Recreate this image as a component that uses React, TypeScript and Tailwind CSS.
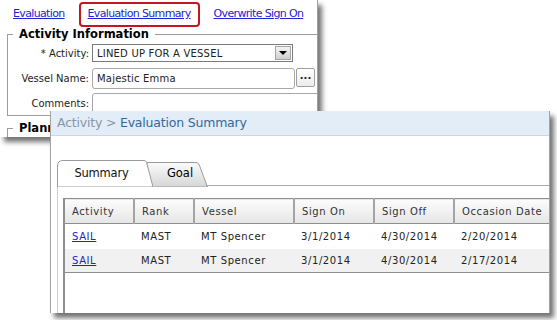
import React from 'react'

const rows = [
  { activity: 'SAIL', rank: 'MAST', vessel: 'MT Spencer', signOn: '3/1/2014', signOff: '4/30/2014', occasion: '2/20/2014' },
  { activity: 'SAIL', rank: 'MAST', vessel: 'MT Spencer', signOn: '3/1/2014', signOff: '4/30/2014', occasion: '2/17/2014' },
]

const columns = ['Activity', 'Rank', 'Vessel', 'Sign On', 'Sign Off', 'Occasion Date']

// Old dialog sitting behind, cut off by the summary window
const EvaluationForm = () => {
  return (
    <div className="absolute left-0 top-0 w-[318px] h-[137px] bg-white overflow-hidden border-r border-[#a0a0a0] shadow-[4px_5px_5px_rgba(0,0,0,0.55)]">
      <div className="flex items-center pt-[2px] pl-[13px] h-[27px] text-[11px] tracking-[-0.65px]">
        <a href="#" className="text-[#1d22d6] underline">Evaluation</a>
        <div className="ml-[14px] h-[25px] px-[7px] flex items-center border-[2.5px] border-[#c3161e] rounded-[4px]">
          <a href="#" className="text-[#1d22d6] underline">Evaluation Summary</a>
        </div>
        <a href="#" className="ml-[14px] text-[#1d22d6] underline">Overwrite Sign On</a>
      </div>

      <fieldset className="ml-[7px] w-[340px] h-[89px] border border-[#9c9c9c]">
        <legend className="ml-[5px] px-[6px] font-bold text-[11.5px] leading-[14px] text-black">Activity Information</legend>
        <div className="grid grid-cols-[81px_1fr] gap-x-[3px] text-[10px] text-[#222] mt-[3px]">
          <div className="h-[18px] flex items-center justify-end">* Activity:</div>
          <div className="w-[201px] h-[18px] flex border border-[#7a7a7a] bg-white">
            <span className="flex-1 flex items-center pl-[4px] tracking-[0.2px]">LINED UP FOR A VESSEL</span>
            <span className="w-[16px] m-[1px] flex items-center justify-center border border-[#a5a5a5] bg-gradient-to-b from-[#f4f4f4] to-[#cfcfcf]">
              <span className="w-0 h-0 border-l-[4px] border-r-[4px] border-t-[4px] border-l-transparent border-r-transparent border-t-black" />
            </span>
          </div>

          <div className="h-[21px] mt-[6px] flex items-center justify-end">Vessel Name:</div>
          <div className="mt-[6px] flex gap-[1px]">
            <div className="w-[203px] h-[21px] flex items-center pl-[4px] border border-[#a8a8a8] rounded-[3px] tracking-[0.2px]">Majestic Emma</div>
            <div className="w-[19px] h-[19px] flex items-center justify-center border border-[#a0a0a0] rounded-[2px] bg-gradient-to-b from-white to-[#ececec] font-bold text-[10px] leading-none pb-[3px]">...</div>
          </div>

          <div className="h-[20px] mt-[4px] flex items-center justify-end">Comments:</div>
          <div className="mt-[4px] w-[240px] h-[30px] border border-[#a8a8a8] rounded-[3px]" />
        </div>
      </fieldset>

      <fieldset className="ml-[7px] mt-[5px] w-[340px] h-[40px] border border-[#9c9c9c]">
        <legend className="ml-[5px] pl-[6px] w-[37px] overflow-hidden whitespace-nowrap font-bold text-[11.5px] leading-[14px] text-black">Planned Voyage</legend>
      </fieldset>
    </div>
  )
}

const Tabs = () => {
  return (
    <div className="flex h-[26px] border-b border-[#a9a9a9] text-[11.5px]">
      <div className="relative z-10 w-[96px] h-[26px] shrink-0">
        <svg className="absolute inset-0" width="96" height="27" viewBox="0 0 96 27">
          <path d="M0.5 27 L0.5 6 Q0.5 0.5 6 0.5 L87 0.5 Q89 0.5 89.6 2.5 L96 27 Z" fill="#ffffff" stroke="#9a9a9a" />
        </svg>
        <span className="relative flex items-center justify-center w-[89px] h-full pt-[2px] text-[#111] tracking-[-0.2px]">Summary</span>
      </div>
      <div className="relative -ml-[6px] mt-[2px] w-[61px] h-[24px] shrink-0">
        <svg className="absolute inset-0" width="61" height="25" viewBox="0 0 61 25">
          <defs>
            <linearGradient id="goalTab" x1="0" y1="0" x2="0" y2="1">
              <stop offset="0" stopColor="#fbfbfb" />
              <stop offset="1" stopColor="#d6d6d6" />
            </linearGradient>
          </defs>
          <path d="M0 25 L0 0.5 L49 0.5 Q51.5 0.5 52.3 3 L60.5 25 Z" fill="url(#goalTab)" stroke="#9a9a9a" />
        </svg>
        <span className="relative flex items-center justify-center w-[60px] h-full pl-[6px] text-black">Goal</span>
      </div>
    </div>
  )
}

const SummaryWindow = () => {
  return (
    <div className="absolute left-[50px] top-[111px] w-[500px] h-[202px] bg-white overflow-hidden border-l border-r border-[#a3a3a3] shadow-[4px_5px_5px_rgba(0,0,0,0.55)] flex flex-col">
      <div className="h-[25px] shrink-0 flex items-center pl-[6px] bg-[#e3edf8] border-b border-[#c9d6e4] text-[12.5px] tracking-[-0.2px]">
        <span className="text-[#8797a8]">Activity &gt;&nbsp;</span>
        <span className="text-[#33689c]">Evaluation Summary</span>
      </div>

      <div className="flex-1 flex flex-col pl-[6px] pt-[24px]">
        <Tabs />
        <div className="flex-1 flex flex-col border-l border-[#cfcfcf] pl-[5px] pt-[12px]">
          <div className="flex-1 border-l-2 border-[#8e8e8e]">
            <table className="table-fixed border-collapse w-[560px] text-[10px] tracking-[0.6px] text-[#222]">
              <colgroup>
                <col className="w-[69px]" />
                <col className="w-[60px]" />
                <col className="w-[100px]" />
                <col className="w-[80px]" />
                <col className="w-[80px]" />
                <col className="w-[171px]" />
              </colgroup>
              <thead>
                <tr className="h-[25px] bg-gradient-to-b from-[#fcfcfc] to-[#e6e6e6] border-t border-b border-[#8e8e8e]">
                  {columns.map((col) => (
                    <th key={col} className="pl-[7px] text-left font-normal border-r-2 border-[#a4a4a4] text-[#333]">{col}</th>
                  ))}
                </tr>
              </thead>
              <tbody>
                {rows.map((row, index) => (
                  <tr key={index} className={index % 2 === 1 ? 'h-[24px] bg-[#f1f1f1] border-b border-[#8e8e8e]' : 'h-[25px] bg-white'}>
                    <td className="pl-[7px]">
                      <a href="#" className="text-[#1d22d6] underline">{row.activity}</a>
                    </td>
                    <td className="pl-[7px]">{row.rank}</td>
                    <td className="pl-[7px]">{row.vessel}</td>
                    <td className="pl-[7px]">{row.signOn}</td>
                    <td className="pl-[7px]">{row.signOff}</td>
                    <td className="pl-[7px]">{row.occasion}</td>
                  </tr>
                ))}
              </tbody>
            </table>
          </div>
        </div>
      </div>
    </div>
  )
}

const App = () => {
  return (
    <div className="relative w-[557px] h-[320px] bg-white overflow-hidden font-['DejaVu_Sans',Verdana,sans-serif]">
      <EvaluationForm />
      <SummaryWindow />
    </div>
  )
}

export default App
